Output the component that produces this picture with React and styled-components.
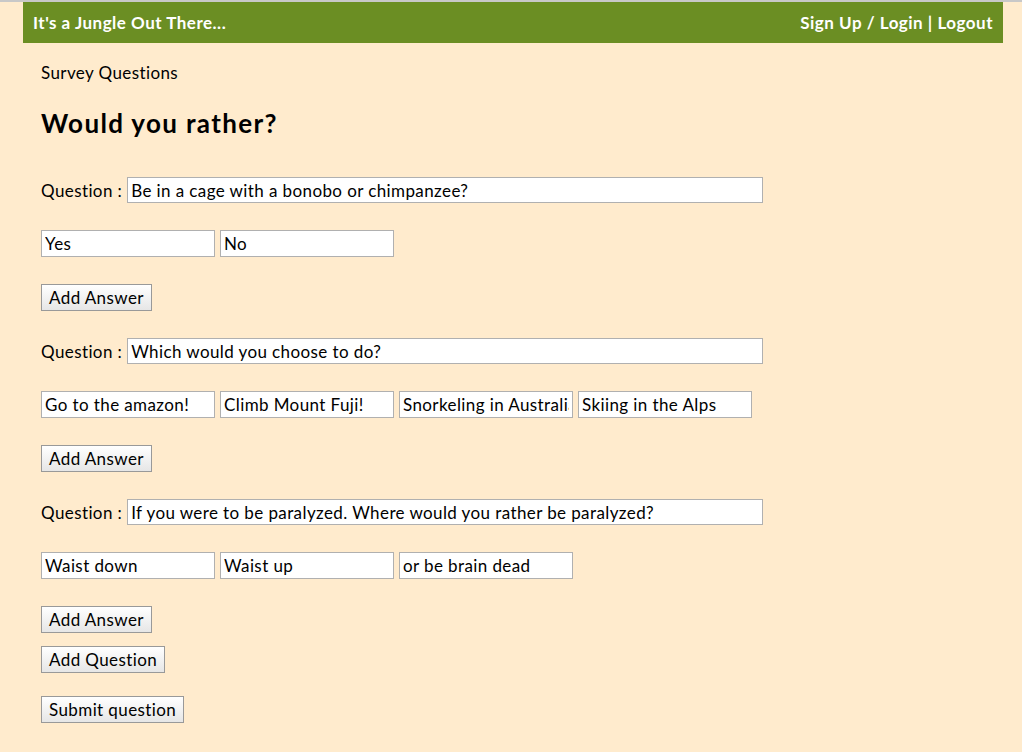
import React from 'react';
import styled, { createGlobalStyle } from 'styled-components';

const GlobalStyle = createGlobalStyle`
  html, body {
    margin: 0;
    padding: 0;
    background: #ffebcd;
  }
  body {
    border-top: 2px solid #c8c8c8;
    font-family: Lato, "Open Sans", sans-serif;
    color: #000;
  }
`;

const Page = styled.div`
  width: 980px;
  margin-left: 23px;
`;

const Header = styled.header`
  height: 41px;
  background: #6b8e23;
  display: flex;
  align-items: center;
  justify-content: space-between;
  padding: 0 10px;
  color: #fff;
  font-weight: bold;
  font-size: 17px;
  letter-spacing: 0.5px;
`;

const Content = styled.main`
  padding: 20px 18px 0;
`;

const Crumb = styled.div`
  font-size: 17px;
  line-height: 20px;
  letter-spacing: 0.4px;
`;

const Title = styled.h1`
  font-size: 26px;
  font-weight: bold;
  margin: 25px 0 0;
  line-height: 30px;
  letter-spacing: 1.35px;
`;

const Block = styled.section`
  display: flex;
  flex-direction: column;
  align-items: flex-start;
`;

const QuestionRow = styled.label`
  display: flex;
  align-items: center;
  gap: 5px;
  margin-top: ${p => p.$first ? '39px' : '27px'};
  font-size: 17px;
  letter-spacing: 0.4px;
`;

const Field = styled.input`
  box-sizing: border-box;
  height: ${p => p.$wide ? '26px' : '27px'};
  width: ${p => p.$wide ? '636px' : '174px'};
  border: 1px solid #b0b0b0;
  background: #fff;
  padding: 0 3px;
  font-family: inherit;
  font-size: 17px;
  letter-spacing: 0.4px;
  color: #000;
  outline: none;
`;

const Answers = styled.div`
  display: flex;
  gap: 5px;
  margin-top: 27px;
`;

const Button = styled.button`
  box-sizing: border-box;
  height: 27px;
  margin-top: ${p => p.$gap || '27px'};
  padding: 0 7px;
  border: 1px solid #999;
  background: linear-gradient(#ffffff, #e6e6e6);
  font-family: inherit;
  font-size: 17px;
  letter-spacing: 0.4px;
  color: #000;
`;

const survey = [
  { q: 'Be in a cage with a bonobo or chimpanzee?', a: ['Yes', 'No'] },
  { q: 'Which would you choose to do?', a: ['Go to the amazon!', 'Climb Mount Fuji!', 'Snorkeling in Australia', 'Skiing in the Alps'] },
  { q: 'If you were to be paralyzed. Where would you rather be paralyzed?', a: ['Waist down', 'Waist up', 'or be brain dead'] },
];

export default function App() {
  return (
    <>
      <GlobalStyle />
      <Page>
        <Header>
          <span>It's a Jungle Out There...</span>
          <span>Sign Up / Login | Logout</span>
        </Header>
        <Content>
          <Crumb>Survey Questions</Crumb>
          <Title>Would you rather?</Title>
          <Block>
            {survey.map((item, i) => (
              <React.Fragment key={i}>
                <QuestionRow $first={i === 0}>
                  Question :
                  <Field $wide readOnly defaultValue={item.q} />
                </QuestionRow>
                <Answers>
                  {item.a.map((ans, j) => (
                    <Field key={j} readOnly defaultValue={ans} />
                  ))}
                </Answers>
                <Button>Add Answer</Button>
              </React.Fragment>
            ))}
            <Button $gap="13px">Add Question</Button>
            <Button $gap="23px">Submit question</Button>
          </Block>
        </Content>
      </Page>
    </>
  );
}
